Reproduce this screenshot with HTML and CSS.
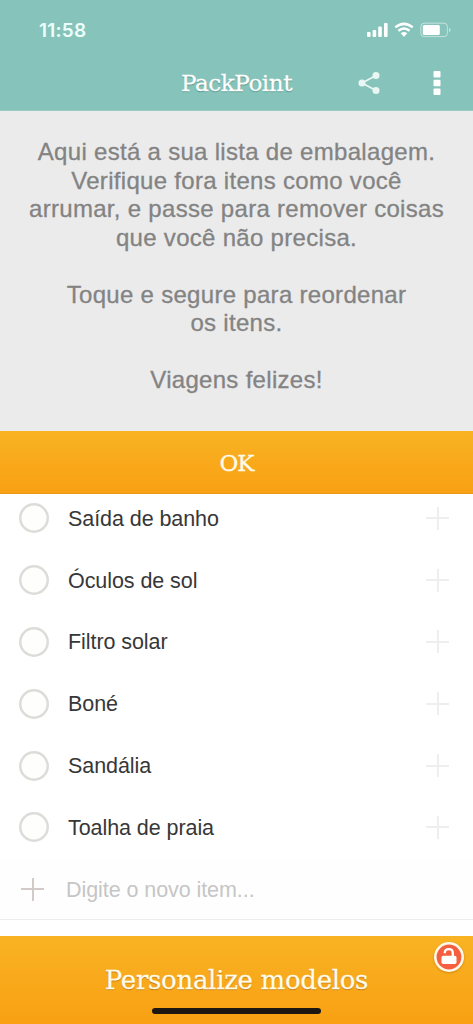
FILE: index.html
```html
<!DOCTYPE html>
<html lang="pt">
<head>
<meta charset="utf-8">
<title>PackPoint</title>
<link rel="stylesheet" href="styles.css">
</head>
<body>
<div class="app">
  <header class="header">
    <div class="status">
      <span class="time">11:58</span>
      <svg class="status-icons" width="88" height="18" viewBox="0 0 88 18">
        <g fill="#fff">
          <rect x="1" y="10" width="3.600" height="5" rx="1"/>
          <rect x="6.600" y="8" width="3.600" height="7" rx="1"/>
          <rect x="12.200" y="4.500" width="3.600" height="10.500" rx="1"/>
          <rect x="18" y="1" width="3.600" height="14" rx="1"/>
          <path d="M35.200 11.300Q38 9.400 40.800 11.300L38 14.400Z" stroke="#fff" stroke-width=".8" stroke-linejoin="round"/>
          <rect x="56.800" y="3" width="17" height="10" rx="1.500"/>
        </g>
        <path d="M29.300 5.400Q38 -1.700 46.700 5.400M32.400 8.700Q38 4.200 43.600 8.700" fill="none" stroke="#fff" stroke-width="2.500"/>
        <rect x="54.800" y="1.200" width="26.600" height="13.400" rx="3.400" fill="none" stroke="#fff" stroke-opacity=".5"/>
        <path d="M83 6v4q1.600-.5 1.600-2t-1.600-2Z" fill="#fff" fill-opacity=".55"/>
      </svg>
    </div>
    <div class="toolbar">
      <h1 class="title">PackPoint</h1>
      <svg class="share" width="22" height="24" viewBox="0 0 22 24">
        <path d="M18 4.500 4 12l14 7.500" fill="none" stroke="#e9f6f3" stroke-width="1.600"/>
        <g fill="#e9f6f3"><circle cx="18" cy="4.500" r="3.500"/><circle cx="4" cy="12" r="3.500"/><circle cx="18" cy="19.500" r="3.500"/></g>
      </svg>
      <svg class="more" width="8" height="26" viewBox="0 0 8 26" fill="#fff">
        <rect x=".5" y="1" width="7" height="6.500" rx="1"/><rect x=".5" y="9.700" width="7" height="6.500" rx="1"/><rect x=".5" y="18.500" width="7" height="6.500" rx="1"/>
      </svg>
    </div>
  </header>

  <section class="tip">
    <p>Aqui está a sua lista de embalagem.<br>Verifique fora itens como você<br>arrumar, e passe para remover coisas<br>que você não precisa.</p>
    <p>Toque e segure para reordenar<br>os itens.</p>
    <p>Viagens felizes!</p>
  </section>
  <div class="ok"><span>OK</span></div>

  <main class="list">
    <div class="item"><i class="circle"></i><span class="name">Saída de banho</span><i class="plus"></i></div>
    <div class="item"><i class="circle"></i><span class="name">Óculos de sol</span><i class="plus"></i></div>
    <div class="item"><i class="circle"></i><span class="name">Filtro solar</span><i class="plus"></i></div>
    <div class="item"><i class="circle"></i><span class="name">Boné</span><i class="plus"></i></div>
    <div class="item"><i class="circle"></i><span class="name">Sandália</span><i class="plus"></i></div>
    <div class="item"><i class="circle"></i><span class="name">Toalha de praia</span><i class="plus"></i></div>
    <div class="item new"><i class="plus dark"></i><span class="name">Digite o novo item...</span></div>
  </main>

  <footer class="footer">
    <span class="cta">Personalize modelos</span>
    <div class="home"></div>
    <svg class="badge" width="32" height="32" viewBox="0 0 32 32">
      <circle cx="16" cy="16" r="13.700" fill="#f4603f" stroke="#fff9e9" stroke-width="2.600"/>
      <rect x="8.500" y="14.700" width="15" height="8.300" rx="1.800" fill="#fff"/>
      <path d="M11.800 12.300v-.6q0-3.600 4-3.600t4 3.600V15.500" fill="none" stroke="#fff" stroke-width="2.300"/>
    </svg>
  </footer>
</div>
</body>
</html>
```
FILE: styles.css
```css
* { box-sizing: border-box; }
body { margin: 0; font-family: "Liberation Sans", Arial, sans-serif; background: #fff; }
.app { width: 473px; height: 1024px; display: flex; flex-direction: column; overflow: hidden; }

.header { height: 111px; background: #86c4bb; border-bottom: 1px solid #9acbc3; flex: none; }
.status { height: 55px; display: flex; justify-content: space-between; padding: 22px 19px 0 39px; }
.time { font: 600 19px/18px Inter, sans-serif; color: #edfffb; letter-spacing: .2px; }
.toolbar { height: 55px; display: grid; grid-template-columns: 1fr auto 1fr; align-items: center; position: relative; }
.title { grid-column: 2; margin: 1px 0 0; font: 400 23px/30px "DejaVu Serif", serif; letter-spacing: -.4px; color: #fff; text-shadow: 0 1px 1px #4b8d83; -webkit-text-stroke: .3px #fff; }
.share { position: absolute; left: 358px; top: 16px; }
.more { position: absolute; left: 433px; top: 15px; }

.tip { height: 320px; flex: none; background: #ebebeb; color: #838383; padding-top: 27px; text-align: center; font-size: 24px; line-height: 28.5px; letter-spacing: .3px; -webkit-text-stroke: .3px #838383; white-space: nowrap; }
.tip p { margin: 0 0 28.5px; }
.ok, .footer { background: linear-gradient(#f8b323, #f9a013); color: #fffbe9; font-family: "DejaVu Serif", serif; }
.ok { height: 63px; flex: none; display: flex; align-items: center; justify-content: center; font-size: 23px; letter-spacing: -1px; padding-top: 1px; border-bottom: 1px solid #e69a19; -webkit-text-stroke: .3px #fffbe9; }

.list { height: 426px; flex: none; display: flex; flex-direction: column; margin-top: -7px; }
.item { height: 61.8px; flex: none; display: flex; align-items: center; padding: 1px 24px 0 19px; }
.circle { width: 30px; height: 30px; box-shadow: inset 0 0 0 2.5px #dcdcd8; border-radius: 50%; margin-right: 19px; background: #fefefd; }
.name { font-size: 21.5px; line-height: 26px; letter-spacing: -.07px; color: #373737; white-space: nowrap; flex: 1; padding-top: 1px; }
.plus { width: 23px; height: 23px; background: linear-gradient(#eee, #eee) center / 2px 100% no-repeat, linear-gradient(#eee, #eee) center / 100% 2px no-repeat; }
.plus.dark { background-image: linear-gradient(#d1cac6, #d1cac6), linear-gradient(#d1cac6, #d1cac6); margin: 0 22px 0 2px; }
.new { background: #fefefe; border-bottom: 1px solid #eee; padding-top: 2px; }
.new .name { color: #c6c6c6; }

.footer { height: 88px; margin-top: auto; position: relative; display: flex; flex-direction: column; align-items: center; flex: none; }
.cta { font-size: 26px; line-height: 36px; margin-top: 26px; letter-spacing: -.3px; text-shadow: 0 1px 1px #b87310; -webkit-text-stroke: .3px #fffbe9; }
.home { width: 169px; height: 6px; border-radius: 3px; background: #1d1711; margin-top: 10px; }
.badge { position: absolute; right: 8px; top: 5px; filter: drop-shadow(0 1px 1px rgba(150, 80, 0, .4)); }
```
